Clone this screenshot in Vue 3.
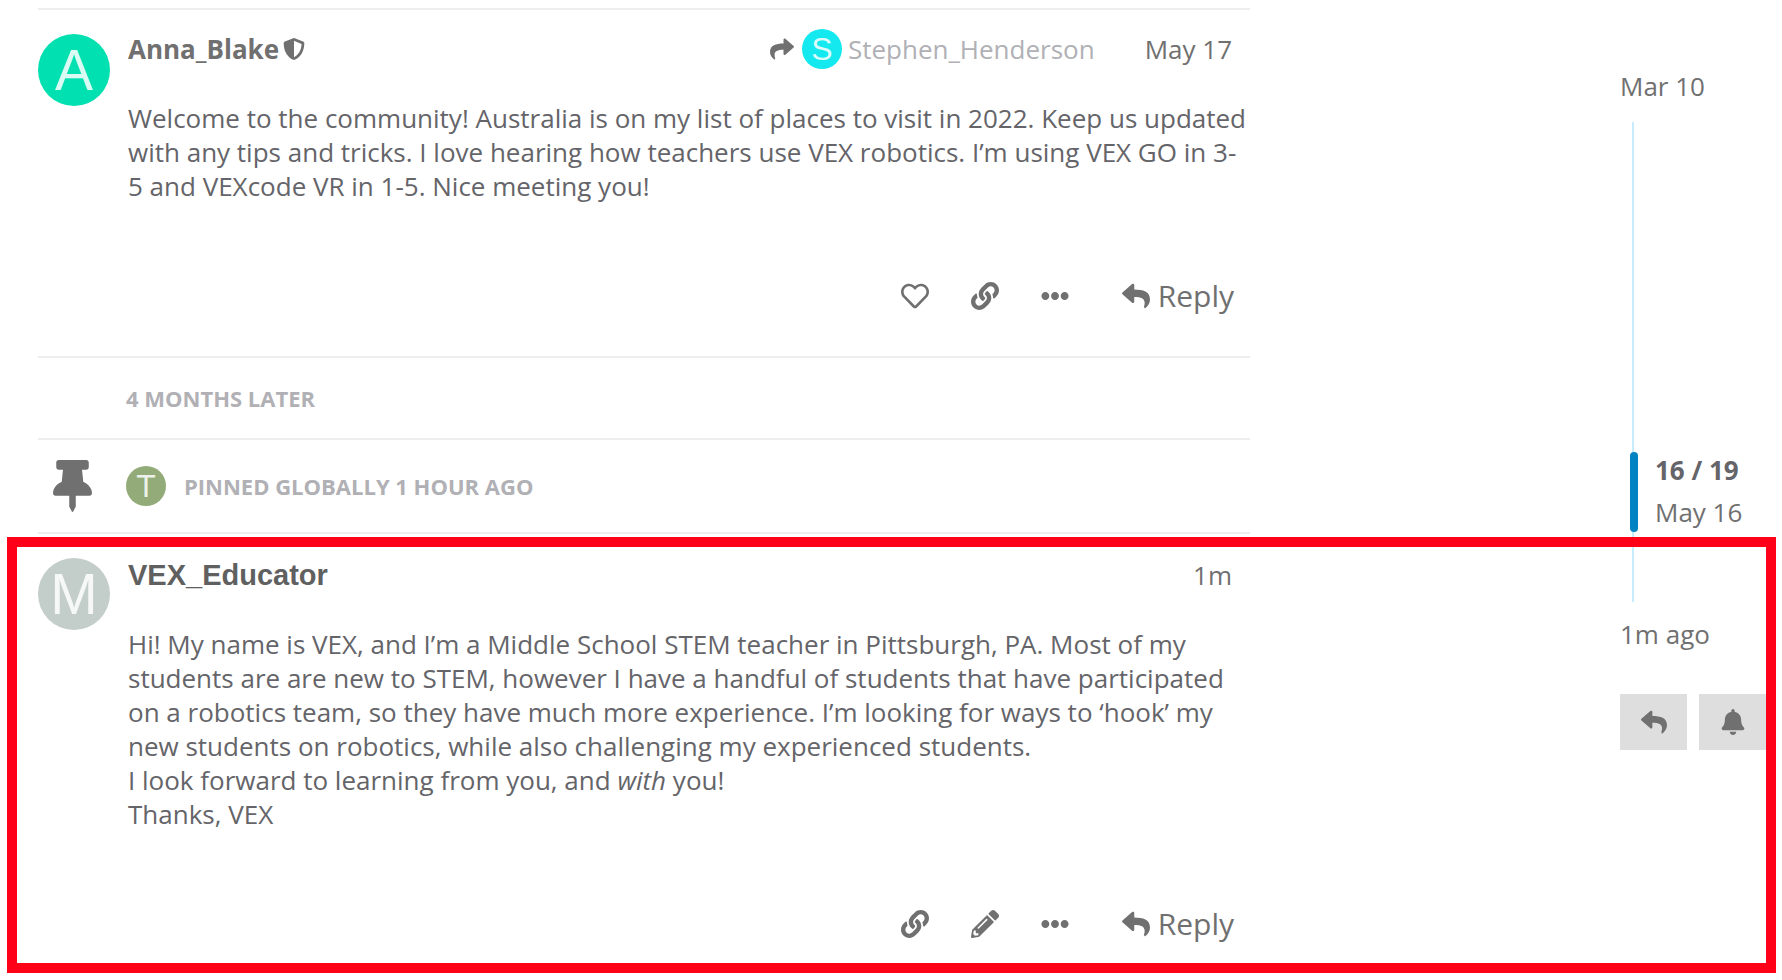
<template>
  <div class="page">
    <main class="stream">
      <template v-for="item in items" :key="item.id">
        <article v-if="item.type === 'post'" class="post" :class="{ own: item.own }">
          <span class="avatar avatar-lg" :class="`avatar-${item.letter.toLowerCase()}`">{{ item.letter }}</span>
          <div class="post-main">
            <header class="meta">
              <a href="#" class="username">{{ item.user }}</a>
              <svg v-if="item.moderator" class="icon shield" viewBox="0 0 512 512"><path :d="icons.shield" /></svg>
              <a v-if="item.replyTo" href="#" class="reply-to">
                <svg class="icon share" viewBox="0 0 512 512"><path :d="icons.share" /></svg>
                <span class="avatar avatar-sm avatar-s">S</span>
                <span>{{ item.replyTo }}</span>
              </a>
              <a href="#" class="date">{{ item.date }}</a>
            </header>
            <div class="cooked">
              <p v-for="(line, i) in item.lines" :key="i">
                <template v-for="(part, j) in line" :key="j"><em v-if="part.em">{{ part.em }}</em><template v-else>{{ part }}</template></template>
              </p>
            </div>
            <div class="actions">
              <button v-for="action in item.actions" :key="action" type="button" class="action" :aria-label="action">
                <svg class="icon" viewBox="0 0 512 512"><path :d="icons[action]" /></svg>
              </button>
              <button type="button" class="action reply">
                <svg class="icon" viewBox="0 0 512 512"><path :d="icons.reply" /></svg>
                <span>Reply</span>
              </button>
            </div>
          </div>
        </article>

        <div v-else-if="item.type === 'gap'" class="notice gap">{{ item.text }}</div>

        <div v-else class="notice small-action">
          <svg class="icon pin" viewBox="0 0 384 512"><path :d="icons.pin" /></svg>
          <span class="avatar avatar-sm avatar-t">T</span>
          <span>{{ item.text }}</span>
        </div>
      </template>
    </main>

    <aside class="timeline">
      <a href="#" class="timeline-date">Mar 10</a>
      <div class="track">
        <div class="before"></div>
        <div class="scroller">
          <div class="handle"></div>
          <div class="position">
            <strong>16 / 19</strong>
            <span>May 16</span>
          </div>
        </div>
        <div class="after"></div>
      </div>
      <a href="#" class="timeline-date">1m ago</a>
      <div class="timeline-controls">
        <button type="button" aria-label="reply">
          <svg class="icon" viewBox="0 0 512 512"><path :d="icons.reply" /></svg>
        </button>
        <button type="button" aria-label="notifications">
          <svg class="icon" viewBox="0 0 448 512"><path :d="icons.bell" /></svg>
        </button>
      </div>
    </aside>

    <div class="callout"></div>
  </div>
</template>

<script setup>
const items = [
  {
    id: 1,
    type: 'post',
    letter: 'A',
    user: 'Anna_Blake',
    moderator: true,
    replyTo: 'Stephen_Henderson',
    date: 'May 17',
    lines: [
      ['Welcome to the community! Australia is on my list of places to visit in 2022. Keep us updated with any tips and tricks. I love hearing how teachers use VEX robotics. I’m using VEX GO in 3-5 and VEXcode VR in 1-5. Nice meeting you!']
    ],
    actions: ['like', 'link', 'more']
  },
  { id: 2, type: 'gap', text: '4 months later' },
  { id: 3, type: 'action', text: 'Pinned globally 1 hour ago' },
  {
    id: 4,
    type: 'post',
    own: true,
    letter: 'M',
    user: 'VEX_Educator',
    date: '1m',
    lines: [
      ['Hi! My name is VEX, and I’m a Middle School STEM teacher in Pittsburgh, PA. Most of my students are are new to STEM, however I have a handful of students that have participated on a robotics team, so they have much more experience. I’m looking for ways to ‘hook’ my new students on robotics, while also challenging my experienced students.'],
      ['I look forward to learning from you, and ', { em: 'with' }, ' you!'],
      ['Thanks, VEX']
    ],
    actions: ['link', 'edit', 'more']
  }
]

const icons = {
  shield: 'M466.5 83.7l-192-80a48.15 48.15 0 0 0-36.9 0l-192 80C27.7 91.1 16 108.6 16 128c0 198.5 114.5 335.7 221.5 380.3 11.8 4.9 25.1 4.9 36.9 0C360.1 472.6 496 349.3 496 128c0-19.4-11.7-36.9-29.5-44.3zM256.1 446.3l-.1-381 175.9 73.3c-3.3 151.4-82.1 261.1-175.8 307.7z',
  share: 'M503.691 189.836L327.687 37.851C312.281 24.546 288 35.347 288 56.015v80.053C127.371 137.907 0 170.1 0 322.326c0 61.441 39.581 122.309 83.333 154.132 13.653 9.931 33.111-2.533 28.077-18.631C66.066 312.814 132.917 274.316 288 272.085V360c0 20.7 24.3 31.453 39.687 18.164l176.004-152c11.071-9.562 11.086-26.753 0-36.328z',
  reply: 'M8.309 189.836L184.313 37.851C199.719 24.546 224 35.347 224 56.015v80.053c160.629 1.839 288 34.032 288 186.258 0 61.441-39.581 122.309-83.333 154.132-13.653 9.931-33.111-2.533-28.077-18.631 45.344-145.012-21.507-183.51-176.59-185.742V360c0 20.7-24.3 31.453-39.687 18.164l-176.004-152c-11.071-9.562-11.086-26.753 0-36.328z',
  like: 'M458.4 64.3C400.6 15.7 311.3 23 256 79.3 200.7 23 111.4 15.6 53.6 64.3-21.6 127.6-10.6 230.8 43 285.5l175.4 178.7c10 10.2 23.4 15.9 37.6 15.9 14.3 0 27.6-5.6 37.6-15.8L469 285.6c53.5-54.7 64.7-157.9-10.6-221.3zm-23.6 187.5L259.4 430.5c-2.4 2.4-4.4 2.4-6.8 0L77.2 251.8c-36.5-37.2-43.9-107.6 7.3-150.7 38.9-32.7 98.9-27.8 136.5 10.5l35 35.7 35-35.7c37.8-38.5 97.8-43.2 136.5-10.6 51.1 43.1 43.5 113.9 7.3 150.8z',
  link: 'M326.612 185.391c59.747 59.809 58.927 155.698.36 214.59-.11.12-.24.25-.36.37l-67.2 67.2c-59.27 59.27-155.699 59.262-214.96 0-59.27-59.26-59.27-155.7 0-214.96l37.106-37.106c9.84-9.84 26.786-3.3 27.294 10.606.648 17.722 3.826 35.527 9.69 52.721 1.986 5.822.567 12.262-3.783 16.612l-13.087 13.087c-28.026 28.026-28.905 73.66-1.155 101.96 28.024 28.579 74.086 28.749 102.325.51l67.2-67.19c28.191-28.191 28.073-73.757 0-101.83-3.701-3.694-7.429-6.564-10.341-8.569a16.037 16.037 0 0 1-6.947-12.606c-.396-10.567 3.348-21.456 11.698-29.806l21.054-21.055c5.521-5.521 14.182-6.199 20.584-1.731a152.482 152.482 0 0 1 20.522 17.197zM467.547 44.449c-59.261-59.262-155.69-59.27-214.96 0l-67.2 67.2c-.12.12-.25.25-.36.37-58.566 58.892-59.387 154.781.36 214.59a152.454 152.454 0 0 0 20.521 17.196c6.402 4.468 15.064 3.789 20.584-1.731l21.054-21.055c8.35-8.35 12.094-19.239 11.698-29.806a16.037 16.037 0 0 0-6.947-12.606c-2.912-2.005-6.64-4.875-10.341-8.569-28.073-28.073-28.191-73.639 0-101.83l67.2-67.19c28.239-28.239 74.3-28.069 102.325.51 27.75 28.3 26.872 73.934-1.155 101.96l-13.087 13.087c-4.35 4.35-5.769 10.79-3.783 16.612 5.864 17.194 9.042 34.999 9.69 52.721.509 13.906 17.454 20.446 27.294 10.606l37.106-37.106c59.271-59.259 59.271-155.699.001-214.959z',
  more: 'M328 256c0 39.8-32.2 72-72 72s-72-32.2-72-72 32.2-72 72-72 72 32.2 72 72zm104-72c-39.8 0-72 32.2-72 72s32.2 72 72 72 72-32.2 72-72-32.2-72-72-72zm-352 0c-39.8 0-72 32.2-72 72s32.2 72 72 72 72-32.2 72-72-32.2-72-72-72z',
  edit: 'M497.9 142.1l-46.1 46.1c-4.7 4.7-12.3 4.7-17 0l-111-111c-4.7-4.7-4.7-12.3 0-17l46.1-46.1c18.7-18.7 49.1-18.7 67.9 0l60.1 60.1c18.8 18.7 18.8 49.1 0 67.9zM284.2 99.8L21.6 362.4.4 483.9c-2.9 16.4 11.4 30.6 27.8 27.8l121.5-21.3 262.6-262.6c4.7-4.7 4.7-12.3 0-17l-111-111c-4.8-4.7-12.4-4.7-17.1 0zM124.1 339.9c-5.5-5.5-5.5-14.3 0-19.8l154-154c5.5-5.5 14.3-5.5 19.8 0s5.5 14.3 0 19.8l-154 154c-5.5 5.5-14.3 5.5-19.8 0zM88 424h48v36.3l-64.5 11.3-31.1-31.1L51.7 376H88v48z',
  pin: 'M298.028 214.267L285.793 96H328c13.255 0 24-10.745 24-24V24c0-13.255-10.745-24-24-24H56C42.745 0 32 10.745 32 24v48c0 13.255 10.745 24 24 24h42.207L85.972 214.267C37.465 236.82 0 277.261 0 328c0 13.255 10.745 24 24 24h136v104.007c0 1.242.289 2.467.845 3.578l24 48c2.941 5.882 11.364 5.893 14.311 0l24-48a8.008 8.008 0 0 0 .845-3.578V352h136c13.255 0 24-10.745 24-24-.001-51.183-37.983-91.42-85.973-113.733z',
  bell: 'M224 512c35.32 0 63.97-28.65 63.97-64H160.03c0 35.35 28.65 64 63.97 64zm215.39-149.71c-19.32-20.76-55.47-51.99-55.47-154.29 0-77.7-54.48-139.9-127.94-155.16V32c0-17.67-14.32-32-31.98-32s-31.98 14.33-31.98 32v20.84C118.56 68.1 64.08 130.3 64.08 208c0 102.3-36.15 133.53-55.47 154.29-6 6.45-8.66 14.16-8.61 21.71.11 16.4 12.98 32 32.1 32h383.8c19.12 0 32-15.6 32.1-32 .05-7.55-2.61-15.27-8.61-21.71z'
}
</script>

<style>
body {
  background: #fff;
}
</style>

<style scoped>
.page {
  position: relative;
  box-sizing: border-box;
  min-height: 100vh;
  display: grid;
  grid-template-columns: minmax(0, 1212px) 146px;
  justify-content: space-between;
  padding: 8px 16px 0 38px;
  font-family: "Open Sans", "Noto Sans", sans-serif;
  font-size: 26px;
  line-height: 34px;
  color: #646469;
}
a {
  color: #707070;
  text-decoration: none;
}
button {
  display: flex;
  align-items: center;
  margin: 0;
  padding: 0;
  border: 0;
  background: none;
  font: inherit;
  color: #707070;
  cursor: pointer;
}
.icon {
  display: block;
  flex: none;
  width: 28px;
  height: 28px;
  fill: #707070;
}
.avatar {
  display: flex;
  flex: none;
  align-items: center;
  justify-content: center;
  border-radius: 50%;
  font-family: "Liberation Sans", Arial, sans-serif;
  font-weight: 400;
  color: rgba(255, 255, 255, 0.85);
}
.avatar-lg {
  width: 72px;
  height: 72px;
  font-size: 57px;
}
.avatar-sm {
  width: 40px;
  height: 40px;
  font-size: 32px;
}
.avatar-a { background: #00e0b0; }
.avatar-m { background: #c3cdc9; }
.avatar-s { background: #13e9ee; }
.avatar-t { background: #92ab79; }

/* posts */
.post {
  display: flex;
  gap: 18px;
  padding: 24px 2px 36px 0;
  border-top: 2px solid #eee;
}
.post-main {
  flex: 1;
  min-width: 0;
}
.meta {
  display: flex;
  align-items: center;
  height: 30px;
  padding-right: 16px;
}
.username {
  font-weight: 700;
}
.own {
  padding-bottom: 24px;
}
.own .post-main {
  padding-top: 2px;
}
.own .username {
  font-family: "Liberation Sans", Arial, sans-serif;
  font-size: 29px;
  color: #606060;
}
.shield {
  width: 22px;
  height: 22px;
  margin-left: 4px;
}
.reply-to {
  display: flex;
  align-items: center;
  margin-left: auto;
  color: #b0b0b5;
}
.share {
  width: 24px;
  height: 24px;
  margin-right: 8px;
}
.reply-to .avatar {
  margin-right: 6px;
}
.date {
  margin-left: auto;
}
.reply-to + .date {
  margin-left: 50px;
}
.cooked {
  margin-top: 37px;
}
.cooked p {
  margin: 0;
}
.actions {
  display: flex;
  justify-content: flex-end;
  margin-top: 69px;
  padding-right: 14px;
}
.action {
  height: 48px;
  padding: 0 21px;
}
.action.reply {
  gap: 8px;
  margin-left: 11px;
  padding-right: 0;
  font-size: 30px;
}

/* time gap and pinned notices */
.notice {
  display: flex;
  align-items: center;
  box-sizing: border-box;
  border-top: 2px solid #eee;
  font-size: 22px;
  font-weight: 700;
  text-transform: uppercase;
  color: #b0b0b5;
}
.gap {
  height: 82px;
  padding-left: 88px;
}
.small-action {
  height: 94px;
  padding-left: 15px;
}
.pin {
  width: 39px;
  height: 52px;
  margin-right: 34px;
}
.notice .avatar {
  margin-right: 18px;
}

/* timeline */
.timeline {
  padding-top: 61px;
}
.timeline-date {
  display: block;
}
.track {
  margin: 19px 0 15px;
}
.before,
.after {
  width: 2px;
  margin-left: 12px;
  background: #c8ecff;
}
.before { height: 330px; }
.after { height: 70px; }
.scroller {
  display: flex;
  gap: 17px;
  height: 80px;
  margin-left: 10px;
}
.handle {
  width: 8px;
  border-radius: 4px;
  background: #0082c3;
}
.position {
  display: flex;
  flex-direction: column;
  justify-content: center;
  gap: 8px;
  padding-bottom: 2px;
  color: #707070;
}
.position strong {
  color: #646469;
}
.timeline-controls {
  display: flex;
  gap: 12px;
  margin-top: 43px;
}
.timeline-controls button {
  justify-content: center;
  flex: 1;
  height: 56px;
  background: #dedede;
}
.timeline-controls .icon {
  width: 26px;
  height: 26px;
}

.callout {
  position: absolute;
  inset: 537px 6px 7px 7px;
  box-sizing: border-box;
  border: 10px solid #ff0019;
  pointer-events: none;
}
</style>
